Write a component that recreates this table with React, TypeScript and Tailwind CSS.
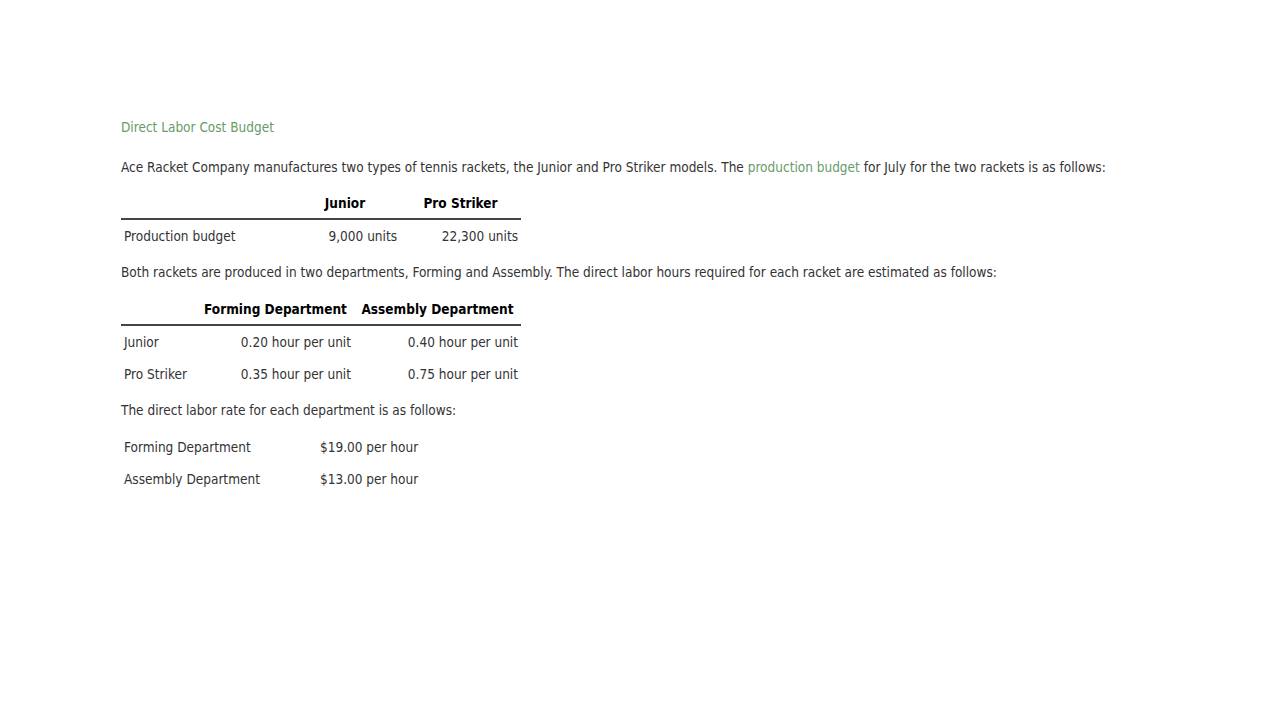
import React from 'react';

const font = { fontFamily: '"DejaVu Sans Condensed", "DejaVu Sans", sans-serif' };

const App: React.FC = () => {
  return (
    <div className="w-[1280px] h-[720px] bg-white text-[#333] text-[13.5px]" style={font}>
      <div className="pl-[121px] pt-[117px]">
        <h2 className="text-[#6a9a6a] leading-[20px]">Direct Labor Cost Budget</h2>

        <p className="mt-[20px] leading-[20px]">
          Ace Racket Company manufactures two types of tennis rackets, the Junior and Pro Striker models. The{' '}
          <span className="text-[#6a9a6a]">production budget</span> for July for the two rackets is as follows:
        </p>

        <table className="mt-[16px] w-[400px] border-collapse">
          <thead>
            <tr className="border-b-2 border-[#444]">
              <th className="w-[169px] p-0"></th>
              <th className="w-[110px] p-0 pb-[5px] text-center font-bold text-black leading-[20px]">Junior</th>
              <th className="p-0 pb-[5px] text-center font-bold text-black leading-[20px]">Pro Striker</th>
            </tr>
          </thead>
          <tbody>
            <tr>
              <td className="px-[3px] py-0 pt-[6px] leading-[20px]">Production budget</td>
              <td className="px-[3px] py-0 pt-[6px] text-right leading-[20px]">9,000 units</td>
              <td className="px-[3px] py-0 pt-[6px] text-right leading-[20px]">22,300 units</td>
            </tr>
          </tbody>
        </table>

        <p className="mt-[16px] leading-[20px]">
          Both rackets are produced in two departments, Forming and Assembly. The direct labor hours required for each
          racket are estimated as follows:
        </p>

        <table className="mt-[17px] w-[400px] border-collapse">
          <thead>
            <tr className="border-b-2 border-[#444]">
              <th className="w-[76px] p-0"></th>
              <th className="w-[157px] p-0 pb-[5px] text-center font-bold text-black leading-[20px]">
                Forming Department
              </th>
              <th className="p-0 pb-[5px] text-center font-bold text-black leading-[20px]">Assembly Department</th>
            </tr>
          </thead>
          <tbody>
            <tr>
              <td className="px-[3px] py-0 pt-[6px] leading-[20px]">Junior</td>
              <td className="px-[3px] py-0 pt-[6px] text-right leading-[20px]">0.20 hour per unit</td>
              <td className="px-[3px] py-0 pt-[6px] text-right leading-[20px]">0.40 hour per unit</td>
            </tr>
            <tr>
              <td className="px-[3px] py-0 pt-[12px] leading-[20px]">Pro Striker</td>
              <td className="px-[3px] py-0 pt-[12px] text-right leading-[20px]">0.35 hour per unit</td>
              <td className="px-[3px] py-0 pt-[12px] text-right leading-[20px]">0.75 hour per unit</td>
            </tr>
          </tbody>
        </table>

        <p className="mt-[16px] leading-[20px]">The direct labor rate for each department is as follows:</p>

        <table className="mt-[17px] border-collapse">
          <tbody>
            <tr>
              <td className="w-[196px] px-[3px] py-0 leading-[20px]">Forming Department</td>
              <td className="px-[3px] py-0 leading-[20px]">$19.00 per hour</td>
            </tr>
            <tr>
              <td className="px-[3px] py-0 pt-[12px] leading-[20px]">Assembly Department</td>
              <td className="px-[3px] py-0 pt-[12px] leading-[20px]">$13.00 per hour</td>
            </tr>
          </tbody>
        </table>
      </div>
    </div>
  );
};

export default App;
